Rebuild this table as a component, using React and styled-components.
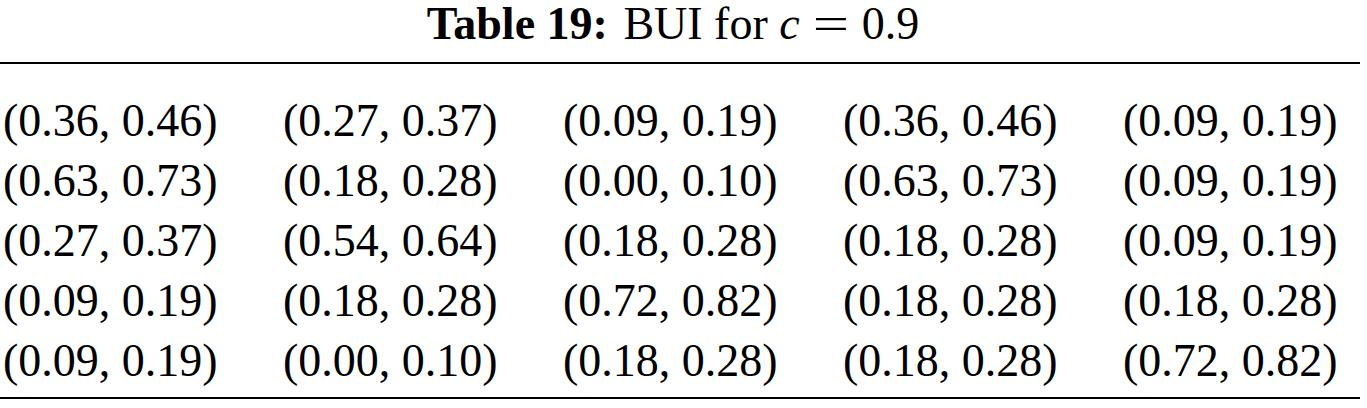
import React from 'react'
import styled, {createGlobalStyle} from 'styled-components'

const Global = createGlobalStyle`
    body{
        margin: 0;
        background: #ffffff;
        color: #000000;
        font-family: "Liberation Serif", "Times New Roman", serif;
    }
`

const Page = styled.section`
    width: 1360px;
    display: flex;
    flex-direction: column;
`

const Caption = styled.h2`
    margin: 0;
    padding-right: 14px;
    height: 62px;
    font-size: 46px;
    font-weight: normal;
    line-height: 48px;
    text-align: center;
    white-space: nowrap;
    &>b{
        font-weight: bold;
        margin-right: 4px;
    }
    &>i{
        font-style: italic;
    }
`

const Equals = styled.span`
    display: inline-block;
    width: 36px;
    margin: 0 13px;
    text-align: center;
    transform: scaleX(1.4);
`

const Rule = styled.hr`
    margin: 0;
    border: none;
    height: 2px;
    background: #000;
`

const Grid = styled.div`
    display: grid;
    grid-template-columns: repeat(5, 280px);
    padding: 27px 0 6px 3px;
`

const Cell = styled.span`
    font-size: 46px;
    line-height: 60px;
    white-space: nowrap;
`

const rows = [
    ['(0.36, 0.46)', '(0.27, 0.37)', '(0.09, 0.19)', '(0.36, 0.46)', '(0.09, 0.19)'],
    ['(0.63, 0.73)', '(0.18, 0.28)', '(0.00, 0.10)', '(0.63, 0.73)', '(0.09, 0.19)'],
    ['(0.27, 0.37)', '(0.54, 0.64)', '(0.18, 0.28)', '(0.18, 0.28)', '(0.09, 0.19)'],
    ['(0.09, 0.19)', '(0.18, 0.28)', '(0.72, 0.82)', '(0.18, 0.28)', '(0.18, 0.28)'],
    ['(0.09, 0.19)', '(0.00, 0.10)', '(0.18, 0.28)', '(0.18, 0.28)', '(0.72, 0.82)'],
]

function App() {
    return (
        <Page>
            <Global/>
            <Caption><b>Table 19:</b> BUI for <i>c</i><Equals>=</Equals>0.9</Caption>
            <Rule/>
            <Grid>
                {rows.map((row, r) => row.map((value, c) => (
                    <Cell key={r + '-' + c}>{value}</Cell>
                )))}
            </Grid>
            <Rule/>
        </Page>
    )
}

export default App
